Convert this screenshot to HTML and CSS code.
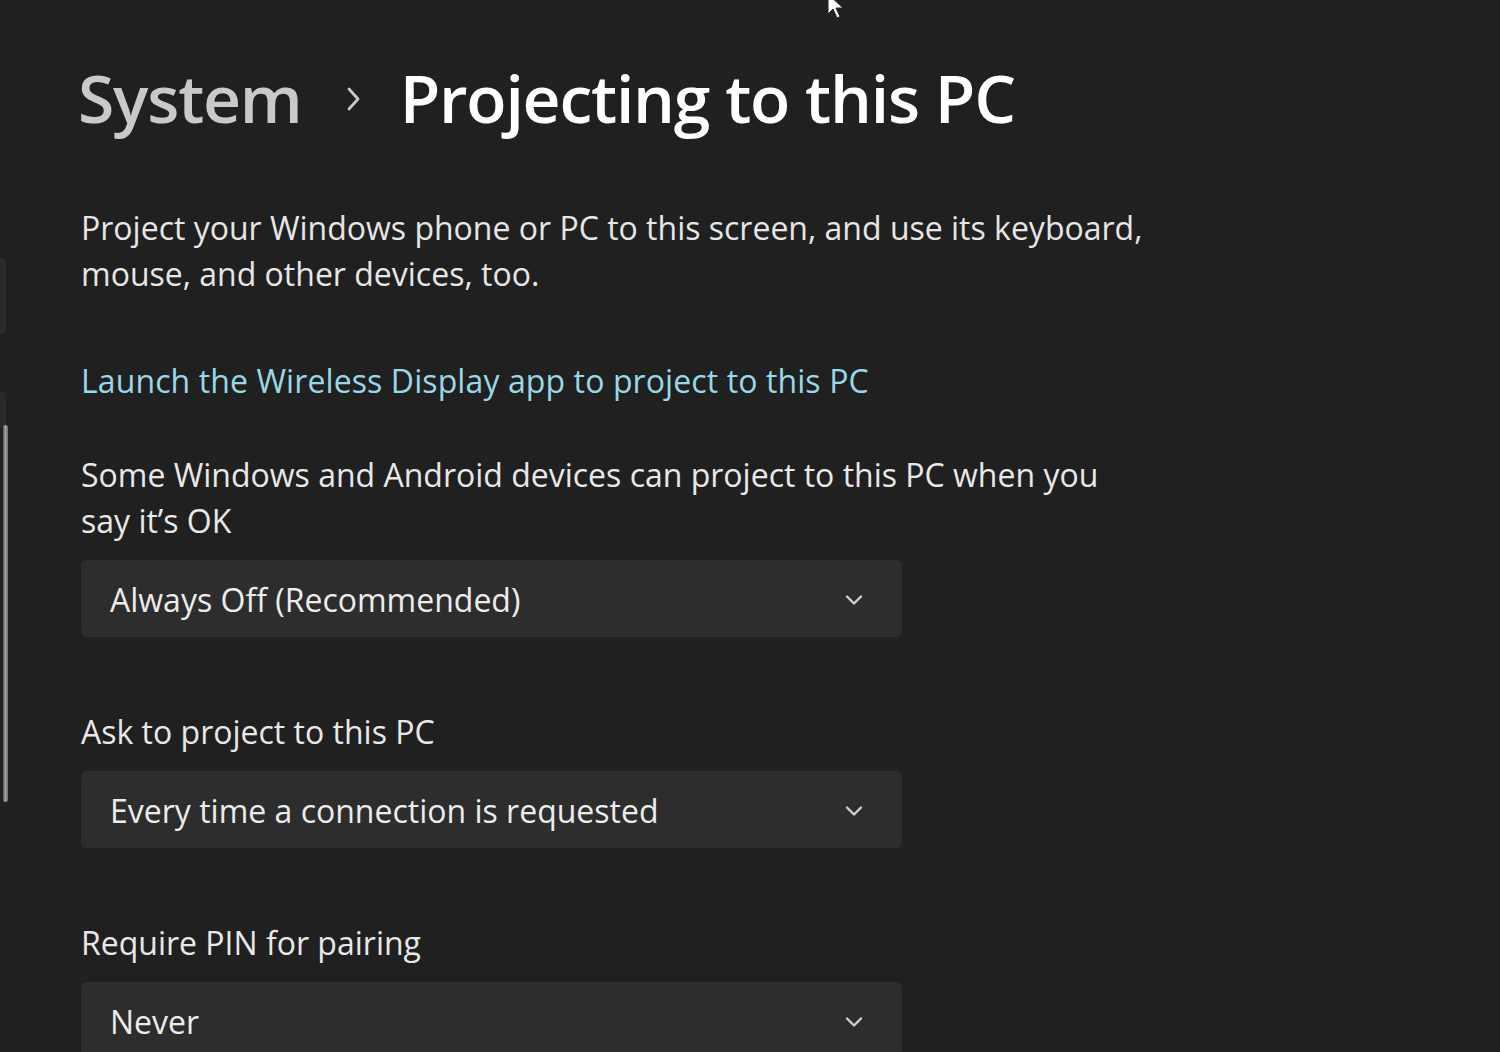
FILE: index.html
```html
<!DOCTYPE html>
<html lang="en">
<head>
<meta charset="utf-8">
<title>Projecting to this PC</title>
<link rel="stylesheet" href="styles.css">
</head>
<body>
<div class="edge">
  <div class="edge-item one"></div>
  <div class="edge-item two"></div>
  <div class="scrollbar"></div>
</div>
<svg class="cursor" width="24" height="30" viewBox="0 0 24 30"><path d="M2 0 L2 20 L7 15 L11 24 L14 22.5 L10 14 L17 14 Z" fill="#fff" stroke="#222" stroke-width="1"/></svg>
<main class="content">
  <h1 class="crumbs">
    <span class="parent">System</span>
    <svg class="crumb-sep" width="18" height="30" viewBox="0 0 18 30"><path d="M5 5 L14 15 L5 25" fill="none" stroke="#c8c8c8" stroke-width="2.8" stroke-linecap="round" stroke-linejoin="round"/></svg>
    <span class="current">Projecting to this PC</span>
  </h1>
  <p class="intro">Project your Windows phone or PC to this screen, and use its keyboard, mouse, and other devices, too.</p>
  <a class="link" href="#">Launch the Wireless Display app to project to this PC</a>
  <section class="setting first">
    <div class="label">Some Windows and Android devices can project to this PC when you say it’s OK</div>
    <div class="select"><span>Always Off (Recommended)</span><svg class="chev" width="22" height="14" viewBox="0 0 22 14"><path d="M4 3.5 L11 10.5 L18 3.5" fill="none" stroke="#cfcfcf" stroke-width="2.4" stroke-linecap="round" stroke-linejoin="round"/></svg></div>
  </section>
  <section class="setting">
    <div class="label">Ask to project to this PC</div>
    <div class="select"><span>Every time a connection is requested</span><svg class="chev" width="22" height="14" viewBox="0 0 22 14"><path d="M4 3.5 L11 10.5 L18 3.5" fill="none" stroke="#cfcfcf" stroke-width="2.4" stroke-linecap="round" stroke-linejoin="round"/></svg></div>
  </section>
  <section class="setting">
    <div class="label">Require PIN for pairing</div>
    <div class="select"><span>Never</span><svg class="chev" width="22" height="14" viewBox="0 0 22 14"><path d="M4 3.5 L11 10.5 L18 3.5" fill="none" stroke="#cfcfcf" stroke-width="2.4" stroke-linecap="round" stroke-linejoin="round"/></svg></div>
  </section>
</main>
</body>
</html>
```
FILE: styles.css
```css
html, body {
  margin: 0;
  padding: 0;
  height: 100%;
  overflow: hidden;
}
body {
  background: #202020;
  color: #e6e6e6;
  font-family: "Open Sans", "Noto Sans", sans-serif;
  position: relative;
}
.edge {
  position: absolute;
  left: 0;
  top: 0;
  width: 10px;
  height: 100%;
}
.edge-item {
  position: absolute;
  left: 0;
  width: 6px;
  background: #2a2a2a;
  border-radius: 0 4px 4px 0;
}
.edge-item.one { top: 258px; height: 76px; }
.edge-item.two { top: 392px; height: 36px; }
.scrollbar {
  position: absolute;
  left: 3px;
  top: 425px;
  width: 5px;
  height: 377px;
  border-radius: 3px;
  background: linear-gradient(to right, #5a5a5a, #a0a0a0 50%, #6a6a6a);
}
.cursor {
  position: absolute;
  left: 826px;
  top: -6px;
}
.content {
  padding: 52px 0 0 81px;
  width: 1100px;
}
.crumbs {
  margin: 0;
  display: flex;
  align-items: center;
  height: 90px;
  font-size: 66px;
  font-weight: 600;
  letter-spacing: -1.2px;
  white-space: nowrap;
}
.parent {
  color: #c9c9c9;
  margin-left: -3px;
}
.crumb-sep {
  margin: 4px 38px 0 42px;
}
.current {
  color: #ffffff;
}
.intro {
  margin: 63px 0 0 0;
  font-size: 32px;
  line-height: 46px;
  width: 1080px;
  letter-spacing: 0;
}
.link {
  display: block;
  margin-top: 61px;
  font-size: 32px;
  line-height: 46px;
  color: #99d8e6;
  text-decoration: none;
  letter-spacing: 0.1px;
}
.setting {
  margin-top: 72px;
}
.setting.first {
  margin-top: 48px;
}
.label {
  font-size: 32px;
  line-height: 46px;
  width: 1050px;
  letter-spacing: 0;
  color: #e8e8e8;
}
.select {
  margin-top: 16px;
  width: 821px;
  height: 77px;
  box-sizing: border-box;
  background: #2d2d2d;
  border-radius: 6px;
  display: flex;
  align-items: center;
  justify-content: space-between;
  padding: 2px 37px 0 29px;
  font-size: 32px;
  letter-spacing: 0;
  color: #ececec;
}
.chev {
  display: block;
}
```
